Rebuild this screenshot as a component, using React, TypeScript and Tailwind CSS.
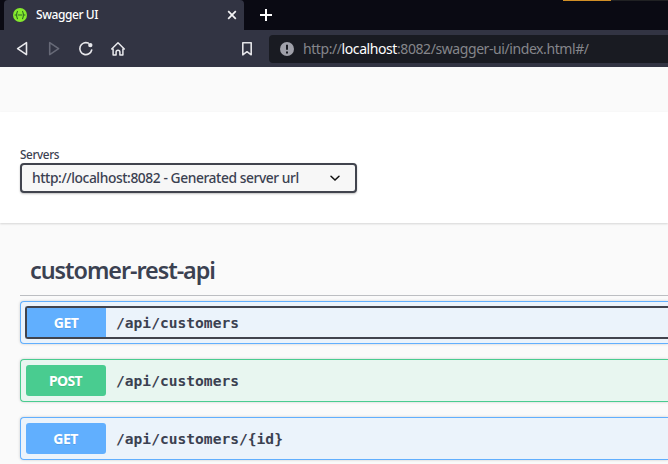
import React from "react";

const sans = "font-['Noto_Sans','Open_Sans',sans-serif]";

function TabBar() {
  return (
    <div className="flex h-[30px] bg-[#0a0a13] pl-1">
      <div className="flex h-[30px] w-[240px] items-center rounded-t-[4px] bg-[#323443] pl-[9px] pr-[7px]">
        <svg width="14" height="14" viewBox="0 0 14 14" fill="none">
          <circle cx="7" cy="7" r="7" fill="#85ea2d" />
          <path d="M5 3.2C3.4 3.2 4.5 6.5 2.8 7c1.7.5.6 3.8 2.2 3.8M9 3.2c1.6 0 .5 3.3 2.2 3.8-1.7.5-.6 3.8-2.2 3.8M4.6 7h4.8" stroke="#2f6a24" strokeWidth="1.1" />
        </svg>
        <span className="ml-[9px] flex-1 whitespace-nowrap text-[12px] font-medium leading-4 tracking-[-0.42px] text-white">Swagger UI</span>
        <svg width="10" height="10" viewBox="0 0 10 10" stroke="#f4f4f6" strokeWidth="1.7">
          <path d="M1.2 1.2l7.6 7.6M8.8 1.2L1.2 8.8" />
        </svg>
      </div>
      <svg className="ml-4 mt-[9px]" width="12" height="12" viewBox="0 0 12 12" stroke="#fff" strokeWidth="2">
        <path d="M6 0v12M0 6h12" />
      </svg>
      <div className="ml-[291px] h-px w-[48px] bg-[#d18f26]" />
      <div className="h-px flex-1 bg-[#202123]" />
    </div>
  );
}

function Toolbar() {
  return (
    <div className="flex h-[37px] items-center bg-[#323443] pl-4">
      <svg width="13" height="16" viewBox="0 0 13 16" fill="none" stroke="#e8e8ec" strokeWidth="1.6" strokeLinejoin="round">
        <path d="M10.5 1.7v11.9L1.6 7.7z" />
      </svg>
      <svg className="ml-[19px]" width="13" height="16" viewBox="0 0 13 16" fill="none" stroke="#676977" strokeWidth="1.6" strokeLinejoin="round">
        <path d="M1.7 1.7v11.9l8.9-5.9z" />
      </svg>
      <svg className="ml-[17px]" width="16" height="16" viewBox="0 0 16 16" fill="none" stroke="#e8e8ec" strokeWidth="1.6" strokeLinecap="round">
        <path d="M10.2 2.1A6 6 0 1 0 13.7 9" />
        <circle cx="12.3" cy="4.1" r="2.2" fill="#e8e8ec" stroke="none" />
      </svg>
      <svg className="ml-4" width="16" height="16" viewBox="0 0 16 16" fill="none" stroke="#e8e8ec" strokeWidth="1.5" strokeLinecap="round" strokeLinejoin="round">
        <path d="M1.7 8L8 1.7 14.3 8H12.9v5.9H9.9v-2.8a1.9 1.9 0 0 0-3.8 0v2.8H3.1V8z" />
      </svg>
      <svg className="ml-[116px]" width="10" height="14" viewBox="0 0 10 14" fill="none" stroke="#e3e3e7" strokeWidth="1.6" strokeLinejoin="round">
        <path d="M.8.8h8.4v12L5 9.7.8 12.8z" />
      </svg>
      <div className="ml-[17px] flex h-7 flex-1 items-center rounded-l-[4px] bg-[#191b22] pl-[11px]">
        <svg width="14" height="14" viewBox="0 0 14 14">
          <circle cx="7" cy="7" r="7" fill="#9fa0a9" />
          <path d="M7 2.8v5M7 9.4v2" stroke="#191b22" strokeWidth="2" />
        </svg>
        <span className="ml-[9px] whitespace-nowrap text-[14px] leading-5 tracking-[-0.42px] text-[#85868b]">
          http://<span className="text-white">localhost</span>:8082/swagger-ui/index.html#/
        </span>
      </div>
    </div>
  );
}

function Servers() {
  return (
    <div className="h-[111px] bg-white pl-5 pt-[34px] shadow-[0_1px_2px_rgba(0,0,0,0.15)]">
      <div className="h-[17px] text-[11.7px] font-medium leading-4 tracking-[-0.36px] text-[#3b4151]">Servers</div>
      <div className="flex h-[30px] w-[337px] items-center rounded-[4px] border-2 border-[#41444e] bg-[#f7f7f7] pl-[10px] pr-[14px] shadow-[0_1px_2px_rgba(0,0,0,0.25)]">
        <span className="flex-1 whitespace-nowrap text-[13.8px] font-medium leading-5 tracking-[-0.42px] text-[#3b4151]">http://localhost:8082 - Generated server url</span>
        <svg width="12" height="8" viewBox="0 0 12 8" fill="none" stroke="#111" strokeWidth="1.5" strokeLinecap="round">
          <path d="M2 2.2l4 3.8 4-3.8" />
        </svg>
      </div>
    </div>
  );
}

function Operation({ method, path, focused }: { method: "GET" | "POST"; path: string; focused?: boolean }) {
  const get = method === "GET";
  return (
    <div className={`flex h-[43px] items-center rounded-l-[4px] border border-r-0 shadow-[0_0_3px_rgba(0,0,0,0.19)] ${get ? "border-[#61affe] bg-[#ebf3fb]" : "border-[#49cc90] bg-[#e8f6f0]"} ${focused ? "pl-1" : "pl-[5px]"}`}>
      <div className={`flex flex-1 items-center ${focused ? "h-[33px] rounded-l-[3px] border-2 border-r-0 border-[#41444e]" : "h-[31px]"}`}>
        <div className={`flex items-center justify-center text-[14px] font-bold text-white [text-shadow:0_1px_0_rgba(0,0,0,0.1)] ${get ? "bg-[#61affe]" : "bg-[#49cc90]"} ${focused ? "h-full w-[79px]" : "h-[31px] w-20 rounded-[3px]"}`}>
          <span className="pb-px pr-px tracking-[-0.6px]">{method}</span>
        </div>
        <span className="ml-[10px] whitespace-nowrap font-['DejaVu_Sans_Mono',monospace] text-[14.6px] font-bold leading-5 text-[#3b4151]">{path}</span>
      </div>
    </div>
  );
}

export default function App() {
  return (
    <div className={`h-[464px] w-[668px] overflow-hidden bg-[#fafafa] ${sans}`}>
      <TabBar />
      <Toolbar />
      <div className="h-[45px]" />
      <Servers />
      <div className="pl-5">
        <h3 className="h-[73px] border-b border-[#bcbec2] pl-[10px] pt-[31px] text-[23.4px] font-semibold leading-8 tracking-[-1.05px] text-[#3b4151]">customer-rest-api</h3>
        <div className="flex flex-col gap-[15px] pt-[5px]">
          <Operation method="GET" path="/api/customers" focused />
          <Operation method="POST" path="/api/customers" />
          <Operation method="GET" path="/api/customers/{id}" />
        </div>
      </div>
    </div>
  );
}
